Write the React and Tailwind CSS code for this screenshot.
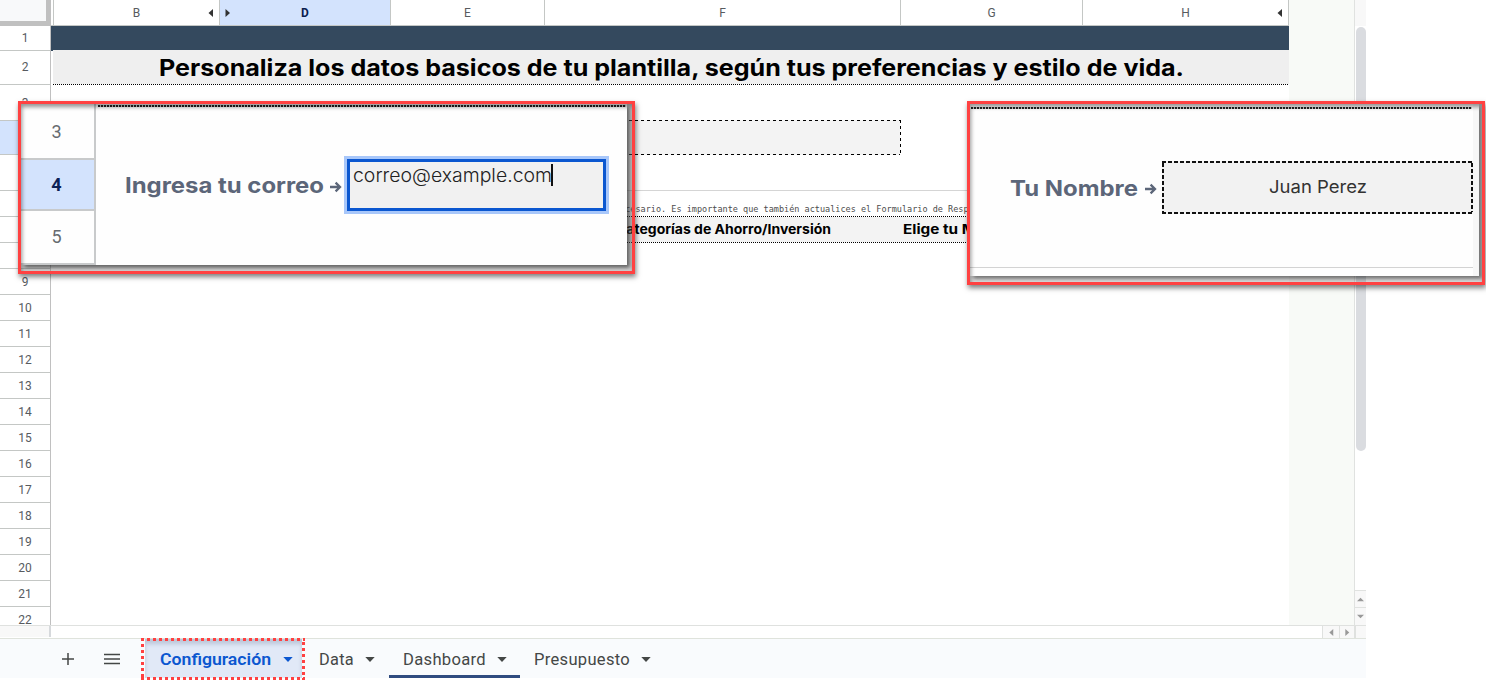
import { useLayoutEffect, useRef } from "react";

// Stretches a line of text horizontally to the given width.
function Fit({ w, className = "", children }) {
  const ref = useRef(null);
  useLayoutEffect(() => {
    const el = ref.current;
    el.style.transform = `scaleX(${w / el.getBoundingClientRect().width})`;
    return () => {
      el.style.transform = "";
    };
  }, [w]);
  return (
    <span className="block shrink-0 text-left" style={{ width: w }}>
      <span ref={ref} className={"inline-block origin-left whitespace-pre " + className}>
        {children}
      </span>
    </span>
  );
}

function Tri({ dir, className }) {
  const d = {
    left: "M6 0 L1.5 4 L6 8Z",
    right: "M1.5 0 L6 4 L1.5 8Z",
    up: "M0 6 L4 2 L8 6Z",
    down: "M0 2 L4 6 L8 2Z",
  }[dir];
  return (
    <svg viewBox="0 0 8 8" className={"block shrink-0 " + className}>
      <path d={d} fill="currentColor" />
    </svg>
  );
}

function Caret({ className = "" }) {
  return (
    <svg viewBox="0 0 10 5" className={"block h-[5px] w-[10px] shrink-0 " + className}>
      <path d="M0.3 0H9.7L5 5Z" fill="currentColor" />
    </svg>
  );
}

function Arrow({ className = "" }) {
  return (
    <svg viewBox="0 0 12 12" className={"block h-3 w-3 shrink-0 " + className}>
      <path d="M0 6H10M5.6 1.6L10 6L5.6 10.4" fill="none" stroke="#5c6679" strokeWidth="2.3" />
    </svg>
  );
}

const ROWS = [
  { n: 1, h: "h-[25px]" },
  { n: 2, h: "h-[34px] pb-px" },
  { n: 3, h: "h-[36px]" },
  { n: 4, h: "h-[34px]", sel: true },
  { n: 5, h: "h-[36px]" },
  ...Array.from({ length: 17 }, (_, i) => ({ n: i + 6, h: "h-[26px] pt-px" })),
];

function ColumnHeaders() {
  const cell = "flex h-full shrink-0 items-center border-r border-[#c4c7c5]";
  return (
    <div className="flex h-[26px] shrink-0 text-[12px] text-[#575b5f]">
      <div className="h-[26px] w-[51px] shrink-0 border-r-[5px] border-b-[5px] border-[#c0c0c0] bg-[#f8f9fa]" />
      <div className="flex h-[26px] w-[1238px] shrink-0 border-b border-[#c4c7c5]">
        <div className={cell + " w-[3px]"} />
        <div className={cell + " relative w-[166px] justify-center"}>
          B
          <Tri dir="left" className="absolute right-[4px] h-2 w-2 text-[#333]" />
        </div>
        <div className={cell + " relative w-[171px] justify-center bg-[#d3e3fd] font-bold text-[#0b1d4f]"}>
          <Tri dir="right" className="absolute left-[4px] h-2 w-2 text-[#333]" />
          D
        </div>
        <div className={cell + " w-[154px] justify-center"}>E</div>
        <div className={cell + " w-[356px] justify-center"}>F</div>
        <div className={cell + " w-[182px] justify-center"}>G</div>
        <div className={cell + " relative w-[206px] justify-center"}>
          H
          <Tri dir="left" className="absolute right-[4px] h-2 w-2 text-[#333]" />
        </div>
      </div>
      <div className="w-[65px] bg-[#f8faf7]" />
      <div className="w-[12px] border-l border-[#e0e2e0] bg-[#f8f8f8]" />
    </div>
  );
}

function RowHeaders() {
  return (
    <div className="w-[51px] shrink-0 border-r border-[#c0c0c0] text-[12px] text-[#575b5f]">
      {ROWS.map((r) => (
        <div
          key={r.n}
          className={
            r.h + " flex items-center justify-center border-b border-[#c4c7c5] " + (r.sel ? "bg-[#d3e3fd]" : "")
          }
        >
          {r.n}
        </div>
      ))}
    </div>
  );
}

const dotsX = "bg-[repeating-linear-gradient(90deg,#000_0_1px,transparent_1px_2px)]";
const dashX = "bg-[repeating-linear-gradient(90deg,#000_0_3px,transparent_3px_6px)]";
const dashY = "bg-[repeating-linear-gradient(180deg,#000_0_3px,transparent_3px_6px)]";

function Cells() {
  return (
    <div className="w-[1238px] shrink-0 font-['Inter',sans-serif]">
      <div className="h-6 bg-[#34495e]" />
      <div className="flex h-[34px]">
        <div className="h-px w-[2px] bg-[#34495e]" />
        <div className="flex flex-1 items-center bg-[#efefef] pt-[2px] pl-[106px]">
          <Fit w={1025} className="text-[22.5px] leading-7 font-bold text-black">
            Personaliza los datos basicos de tu plantilla, según tus preferencias y estilo de vida.
          </Fit>
        </div>
      </div>
      <div className={"ml-[2px] h-px " + dotsX} />
      <div className="h-[35px]" />
      <div className="ml-[494px] flex h-[35px] w-[356px]">
        <div className="flex flex-1 flex-col justify-between bg-[#f3f3f3]">
          <div className={"h-px " + dashX} />
          <div className={"h-px " + dashX} />
        </div>
        <div className={"w-px " + dashY} />
      </div>
      <div className="h-[35px]" />
      <div className="h-px bg-[#d5d5d5]" />
      <div className="h-[25px] overflow-hidden pt-[11px] pl-[564px] text-[9px] leading-[13px]">
        <Fit w={379.2} className="font-['DejaVu_Sans_Mono',monospace] text-[#4d4d4d]">
          {"necesario. Es importante que también actualices el Formulario de Respuesta"}
        </Fit>
      </div>
      <div className={"h-px " + dotsX} />
      <div className="flex h-[25px] items-center bg-[#f3f3f3] pb-[3px] pl-[565px]">
        <Fit w={215} className="text-[13px] leading-5 font-bold text-black">
          Categorías de Ahorro/Inversión
        </Fit>
        <div className="w-[72px]" />
        <Fit w={73} className="text-[13px] leading-5 font-bold text-black">
          Elige tu M
        </Fit>
      </div>
      <div className={"h-px " + dotsX} />
    </div>
  );
}

function VerticalScroll() {
  return (
    <div className="flex w-[12px] shrink-0 flex-col border-l border-[#e0e2e0]">
      <div className="mt-px ml-px h-[424px] w-[10px] rounded-full bg-[#dadce0]" />
      <div className="flex-1" />
      <div className="flex h-[17px] items-center justify-center border-t border-[#e0e2e0] bg-[#f8f8f8]">
        <Tri dir="up" className="h-[7px] w-[7px] text-[#999]" />
      </div>
      <div className="flex h-[18px] items-center justify-center border-t border-[#e0e2e0] bg-[#f8f8f8]">
        <Tri dir="down" className="h-[7px] w-[7px] text-[#999]" />
      </div>
    </div>
  );
}

function HorizontalScroll() {
  return (
    <div className="flex h-[13px] shrink-0 border-t border-[#dfe1df]">
      <div className="h-[11px] w-[51px] border-r-2 border-[#d6d9dc] bg-[#f8f8f8]" />
      <div className="flex-1" />
      <div className="flex h-[12px] w-[17px] items-center justify-center border-l border-[#dfe1df] bg-[#f8f8f8]">
        <Tri dir="left" className="h-[7px] w-[7px] text-[#999]" />
      </div>
      <div className="flex h-[12px] w-[15px] items-center justify-center border-l border-[#dfe1df] bg-[#f8f8f8]">
        <Tri dir="right" className="h-[7px] w-[7px] text-[#999]" />
      </div>
      <div className="h-[12px] w-[12px] border-l-[2px] border-[#dfe1df] bg-[#f8f8f8]" />
    </div>
  );
}

function TabBar() {
  return (
    <div className="flex h-[40px] shrink-0 items-start border-t border-[#dfe3dc] bg-[#f9fbfd] text-[16px] text-[#444746]">
      <svg viewBox="0 0 12 12" className="mt-[14px] ml-[61.5px] h-3 w-3">
        <path d="M6 0V12M0 6H12" stroke="#444746" strokeWidth="1.5" />
      </svg>
      <svg viewBox="0 0 16 12" className="mt-[14px] ml-[30px] h-3 w-4">
        <path d="M0 1.5H16M0 6H16M0 10.5H16" stroke="#444746" strokeWidth="1.5" />
      </svg>
      <div className="ml-[25.5px] flex h-[39px] w-[157px] items-center bg-[#e1e9f7] pt-[2px] pl-[15px] text-[#0b57d0] shadow-[inset_0_5px_4px_#bcc6d8]">
        <Fit w={111} className="leading-5 font-semibold">
          Configuración
        </Fit>
        <Caret className="ml-3" />
      </div>
      <div className="flex h-[39px] items-center pt-[2px] pl-[17px]">
        <Fit w={35} className="leading-5 tracking-[0.3px]">
          Data
        </Fit>
        <Caret className="ml-[11px]" />
      </div>
      <div className="ml-[14px] flex h-[39px] w-[131px] items-center border-b-[3px] border-[#304c80] pt-[5px] pl-[14px]">
        <Fit w={83} className="leading-5 tracking-[0.3px]">
          Dashboard
        </Fit>
        <Caret className="ml-[11px]" />
      </div>
      <div className="flex h-[39px] items-center pt-[2px] pl-[14px]">
        <Fit w={96} className="leading-5 tracking-[0.3px]">
          Presupuesto
        </Fit>
        <Caret className="ml-[11px]" />
      </div>
    </div>
  );
}

const frame =
  "pointer-events-none absolute inset-0 border-[3px] border-[#ff4141] shadow-[1px_3px_5px_rgba(0,0,0,0.5),inset_1px_3px_4px_rgba(0,0,0,0.42)]";
const dots2 = "bg-[repeating-linear-gradient(90deg,#222_0_2px,#ccc_2px_3px)]";

function EmailCallout() {
  return (
    <div className="absolute top-[101px] left-[18px] h-[173px] w-[617px] bg-[rgba(145,145,145,0.35)] pt-[3px] pl-[3px]">
      <div className="flex h-[161px] w-[606px] bg-[#fefefe] shadow-[3px_3px_4px_rgba(0,0,0,0.55)]">
        <div className="flex w-[75px] shrink-0 flex-col border-r-[2px] border-[#c8cacb] pt-px text-[18px] text-[#666b70]">
          <div className="flex h-[55px] items-center justify-center border-b-2 border-[#c8cacb]">
            <span className="-ml-[2px]">3</span>
          </div>
          <div className="flex h-[51px] items-center justify-center border-b-2 border-[#c8cacb] bg-[#d3e3fd] font-bold text-[#0b2155]">
            <span className="-ml-[2px]">4</span>
          </div>
          <div className="flex h-[54px] items-center justify-center border-b-2 border-[#c8cacb] pb-[2px]">
            <span className="-ml-[2px]">5</span>
          </div>
        </div>
        <div className="flex flex-1 flex-col font-['Inter',sans-serif]">
          <div className={"mt-px ml-[2px] h-[2px] w-[528px] " + dots2} />
          <div className="flex pt-[49px] pl-[29px]">
            <Fit w={199} className="pt-[15px] text-[21.5px] leading-7 font-bold text-[#5c6679]">
              Ingresa tu correo
            </Fit>
            <Arrow className="mt-[25px] ml-[6px]" />
            <div className="ml-[2px] h-[58px] w-[265px] border-[3px] border-[#a8c7fa]">
              <div className="flex h-full w-full border-[3px] border-[#0b57d0] bg-[#f1f1f1] pl-[3px]">
                <Fit w={199} className="text-[18.5px] leading-[27px] font-light text-[#222]">
                  correo@example.com
                </Fit>
                <div className="mt-[2px] -ml-px h-[22px] w-[2px] shrink-0 bg-[#111]" />
              </div>
            </div>
          </div>
        </div>
      </div>
      <div className={frame} />
    </div>
  );
}

function NameCallout() {
  return (
    <div className="absolute top-[101px] left-[967px] h-[184px] w-[518px] bg-[rgba(145,145,145,0.25)] pt-[3px] pl-[3px]">
      <div className="flex h-[172px] w-[509px] bg-[#f7f7f7] font-['Inter',sans-serif] shadow-[3px_3px_4px_rgba(0,0,0,0.5)]">
        <div className="flex h-[172px] w-[503px] flex-col bg-[#fefefe]">
          <div className={"mt-[3px] ml-px h-[2px] w-[501px] shrink-0 " + dots2} />
          <div className="flex h-[159px] w-[503px] shrink-0 border-b border-[#d3d3d3] pt-[52px] pl-[40px]">
            <Fit w={128} className="pt-[13px] text-[21.5px] leading-7 font-bold text-[#5c6679]">
              Tu Nombre
            </Fit>
            <Arrow className="mt-[22px] ml-[7px]" />
            <div className="ml-[5px] flex h-[53px] w-[311px] shrink-0 flex-col justify-between bg-[#f2f2f2]">
              <div className="h-[2px] bg-[repeating-linear-gradient(90deg,#111_0_4px,transparent_4px_6px)]" />
              <div className="flex h-[49px] justify-between">
                <div className="w-[2px] bg-[repeating-linear-gradient(180deg,#111_0_4px,transparent_4px_6px)]" />
                <Fit w={98} className="pt-[10px] text-[17.5px] leading-7 font-normal text-[#333]">
                  Juan Perez
                </Fit>
                <div className="w-[2px] bg-[repeating-linear-gradient(180deg,#111_0_4px,transparent_4px_6px)]" />
              </div>
              <div className="h-[2px] bg-[repeating-linear-gradient(90deg,#111_0_4px,transparent_4px_6px)]" />
            </div>
          </div>
        </div>
      </div>
      <div className={frame} />
    </div>
  );
}

export default function App() {
  return (
    <div className="relative h-[680px] w-[1486px] overflow-hidden bg-white font-['Roboto',sans-serif]">
      <div className="flex w-[1366px] flex-col">
        <ColumnHeaders />
        <div className="flex h-[599px] shrink-0 overflow-hidden">
          <RowHeaders />
          <Cells />
          <div className="w-[65px] shrink-0 bg-[#f8faf7]" />
          <VerticalScroll />
        </div>
        <HorizontalScroll />
        <TabBar />
      </div>
      <EmailCallout />
      <NameCallout />
      <svg viewBox="0 0 164 42" className="absolute top-[638px] left-[141px] h-[42px] w-[164px]">
        <path
          d="M0 1.5H164M0 40.5H164M1.5 6V42M162.5 4V42"
          fill="none"
          stroke="#ff4141"
          strokeWidth="3"
          strokeDasharray="3 3"
        />
      </svg>
    </div>
  );
}
